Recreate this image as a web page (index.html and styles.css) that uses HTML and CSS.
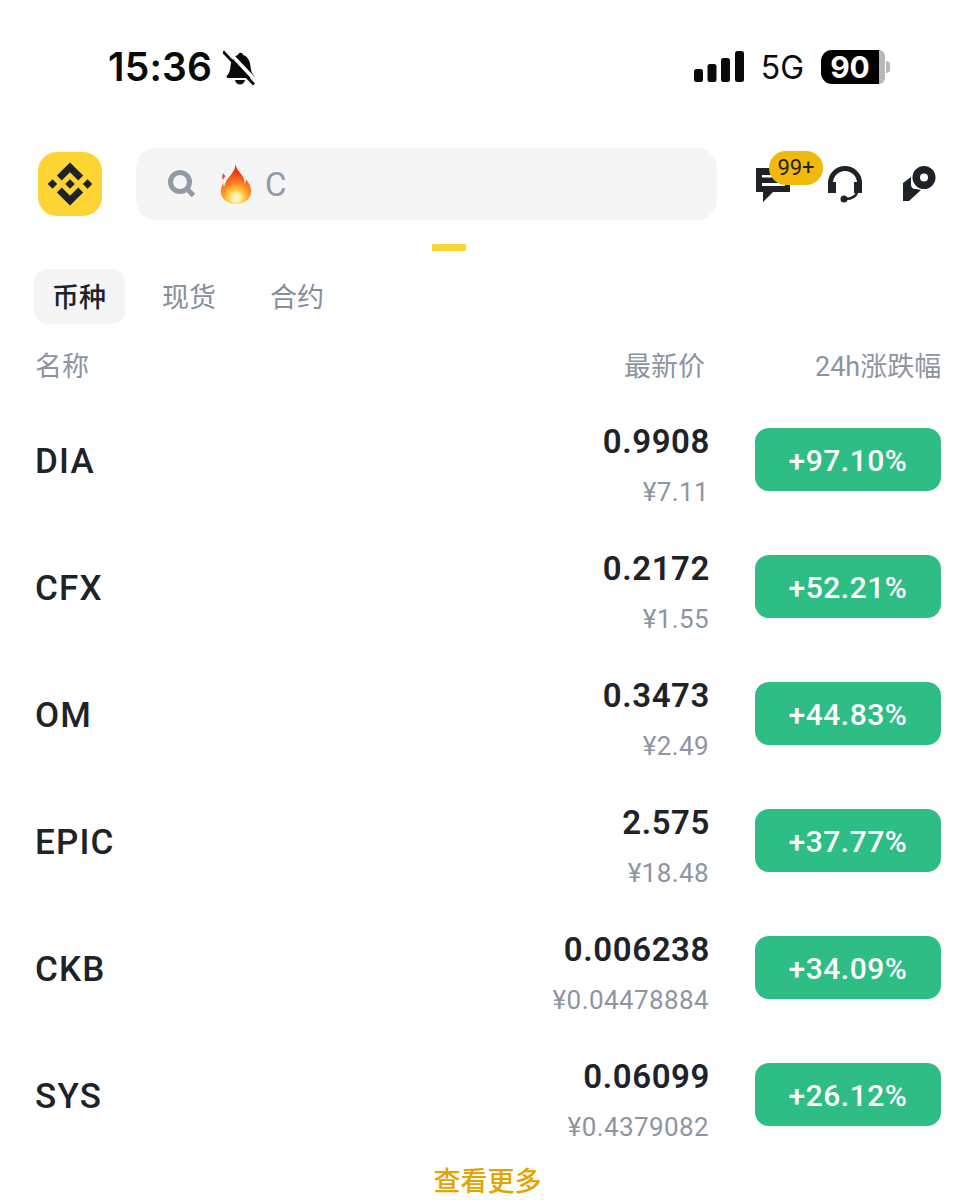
FILE: index.html
```html
<!DOCTYPE html>
<html lang="zh">
<head>
<meta charset="utf-8">
<title>Markets</title>
<link rel="stylesheet" href="styles.css">
</head>
<body>
<div class="page">
  <div class="status">
    <div class="status-left">
      <span class="time">15:36</span>
      <svg class="bell" viewBox="0 0 32 36" width="32" height="36"><path d="M4 25.500c2-2 3-4.500 3.500-9C8 10 11 6 15 5c.3-3 4.700-3 5 0 4 1 7 5 7.500 11.500.5 4.500 1.500 7 3.500 9 1 1 .5 2.500-1 2.500H5c-1.500 0-2-1.500-1-2.500z" fill="#0a0a0a"/><path d="M12 30h10c-.5 3-3 4.500-5 4.500S12.500 33 12 30z" fill="#0a0a0a"/><path d="M3 -1l31 33" stroke="#fff" stroke-width="3.500"/><path d="M0 1.500l31 33" stroke="#0a0a0a" stroke-width="2.800"/></svg>
    </div>
    <div class="status-right">
      <svg class="signal" viewBox="0 0 50 32" width="50" height="32"><rect x="0" y="18" width="9" height="13" rx="2.500"/><rect x="13.500" y="13" width="9" height="18" rx="2.500"/><rect x="27" y="7" width="9" height="24" rx="2.500"/><rect x="41" y="0" width="9" height="31" rx="2.500"/></svg>
      <span class="net">5G</span>
      <div class="battery"><div class="battery-body"><span class="battery-num">90</span></div><div class="battery-rest"></div><div class="battery-cap"></div></div>
    </div>
  </div>

  <div class="header">
    <svg class="logo" viewBox="0 0 64 64" width="64" height="64"><rect width="64" height="64" rx="19" fill="#fcd535"/><g fill="#1e2329" transform="translate(32 32) scale(1.05) translate(-32 -32)"><path d="M32 11.500l12.500 12.500-4.600 4.600L32 20.700l-7.900 7.900-4.600-4.600z"/><path d="M32 52.500L19.500 40l4.600-4.600 7.900 7.900 7.900-7.900 4.600 4.600z"/><path d="M15.300 27.400l4.600 4.600-4.600 4.600-4.600-4.600z"/><path d="M48.700 27.400l4.600 4.600-4.600 4.600-4.600-4.600z"/><path d="M32 27.400l4.600 4.600-4.600 4.600-4.600-4.600z"/></g></svg>
    <div class="search">
      <svg class="search-icon" viewBox="0 0 28 28" width="28" height="28"><circle cx="12" cy="12" r="9.500" fill="none" stroke="#929aa5" stroke-width="5"/><path d="M18.500 18.500l7 7" stroke="#929aa5" stroke-width="5"/></svg>
      <svg class="flame" viewBox="0 0 32 40" width="32" height="40"><defs><radialGradient id="fi" gradientUnits="userSpaceOnUse" cx="16" cy="34" r="32"><stop offset="0" stop-color="#fffef0"/><stop offset=".12" stop-color="#fff3a0"/><stop offset=".28" stop-color="#ffc23a"/><stop offset=".5" stop-color="#fb7c1e"/><stop offset=".8" stop-color="#ef3a14"/><stop offset="1" stop-color="#e62a10"/></radialGradient></defs><path d="M15.500 0c.7 5 4.500 8 7 12 1.500 2.500 2 4.500 2.200 7.500 1-1 1.500-2.500 1.300-4 3 3 5 7.500 5 12C31 35 24.500 40 16 40S1 35 1 27.500c0-3.500 1-6.500 2.500-9-.5 1.500-.3 3 .8 4C5 18 7 15.500 9.500 12.500 12.500 9 15.500 5 15.500 0z" fill="url(#fi)"/><path d="M3 9c.5 1.500 1.500 2.500 3 3-1.500 1-2.500 2.500-3 4-1-2-1-4.500 0-7z" fill="#f14a1a"/></svg>
      <span class="search-text">C</span>
    </div>
    <div class="actions">
      <div class="msg">
        <svg viewBox="0 0 36 36" width="36" height="36"><path fill-rule="evenodd" d="M1 2h34v24H18L8 36V26H1zM7 9v2.500h22V9zM7 17v3h23v-3z" fill="#1e2329"/></svg>
        <span class="badge">99+</span>
      </div>
      <svg class="headset" viewBox="0 0 36 37" width="36" height="37"><path d="M3.500 24v-7a14.500 14.500 0 0 1 29 0v7" fill="none" stroke="#1e2329" stroke-width="5"/><path d="M1 16h8v11H1zM27 16h8v11h-8z" fill="#1e2329"/><path d="M30 25c0 5-5 8-12 8" fill="none" stroke="#1e2329" stroke-width="2.500"/><circle cx="17" cy="33" r="3.500" fill="#1e2329"/></svg>
      <svg class="gift" viewBox="0 0 36 36" width="36" height="36"><path fill-rule="evenodd" d="M23 0a11.500 11.500 0 1 1 0 23 11.500 11.500 0 0 1 0-23zm0 7.500a4 4 0 1 0 0 8 4 4 0 0 0 0-8z" fill="#1e2329"/><path d="M2 17l8-6v8c.5 3 2.500 4.500 5 4l5 1L8 35H2z" fill="#1e2329"/></svg>
    </div>
  </div>

  <div class="indicator"></div>

  <div class="tabs">
    <span class="tab tab-active">币种</span>
    <span class="tab">现货</span>
    <span class="tab">合约</span>
  </div>

  <div class="cols">
    <span class="col-name">名称</span>
    <span class="col-price">最新价</span>
    <span class="col-change">24h涨跌幅</span>
  </div>

  <div class="list">
    <div class="row"><span class="name">DIA</span><div class="prices"><span class="price">0.9908</span><span class="sub">¥7.11</span></div><span class="pct">+97.10%</span></div>
    <div class="row"><span class="name">CFX</span><div class="prices"><span class="price">0.2172</span><span class="sub">¥1.55</span></div><span class="pct">+52.21%</span></div>
    <div class="row"><span class="name">OM</span><div class="prices"><span class="price">0.3473</span><span class="sub">¥2.49</span></div><span class="pct">+44.83%</span></div>
    <div class="row"><span class="name">EPIC</span><div class="prices"><span class="price">2.575</span><span class="sub">¥18.48</span></div><span class="pct">+37.77%</span></div>
    <div class="row"><span class="name">CKB</span><div class="prices"><span class="price">0.006238</span><span class="sub">¥0.04478884</span></div><span class="pct">+34.09%</span></div>
    <div class="row"><span class="name">SYS</span><div class="prices"><span class="price">0.06099</span><span class="sub">¥0.4379082</span></div><span class="pct">+26.12%</span></div>
  </div>

  <div class="more">查看更多</div>
</div>
</body>
</html>
```
FILE: styles.css
```css
* { box-sizing: border-box; }
html, body { margin: 0; padding: 0; background: #fff; }
body { font-family: Roboto, "Noto Sans CJK SC", sans-serif; color: #1e2329; overflow: hidden; }
.page { width: 975px; height: 1200px; overflow: hidden; }

.status { height: 148px; display: flex; justify-content: space-between; align-items: flex-start; padding: 44px 85px 0 108px; }
.status-left { display: flex; align-items: center; gap: 11px; }
.time { font-family: Inter, sans-serif; font-size: 39px; line-height: 46px; font-weight: 600; color: #0a0a0a; letter-spacing: .2px; }
.bell { margin-top: 2px; }
.status-right { display: flex; align-items: center; height: 46px; }
.signal { fill: #0a0a0a; margin-right: 17px; margin-top: -1px; }
.net { font-family: Inter, sans-serif; font-size: 32px; font-weight: 400; color: #0a0a0a; margin-right: 17px; }
.battery { display: flex; align-items: center; height: 34px; }
.battery-body { width: 58px; height: 34px; background: #000; border-radius: 11px 0 0 11px; display: flex; align-items: center; justify-content: center; }
.battery-num { font-family: Inter, sans-serif; font-size: 30px; font-weight: 700; color: #fff; }
.battery-rest { width: 6px; height: 34px; background: #b8b8b8; border-radius: 0 9px 9px 0; }
.battery-cap { width: 4px; height: 12px; margin-left: 1px; background: #b8b8b8; border-radius: 0 4px 4px 0; }

.header { display: flex; align-items: center; height: 72px; padding-left: 38px; }
.logo { flex: none; }
.search { width: 581px; height: 72px; margin-left: 34px; background: #f5f5f5; border-radius: 20px; display: flex; align-items: center; padding-left: 32px; }
.search-icon { flex: none; margin-top: -1px; }
.flame { flex: none; margin-left: 24px; }
.search-text { font-size: 33px; color: #929aa5; margin-left: 13px; font-weight: 400; }
.actions { display: flex; align-items: center; position: relative; }
.msg { position: relative; width: 36px; height: 36px; margin-left: 38px; }
.badge { position: absolute; left: 14px; top: -15px; width: 54px; height: 34px; border-radius: 17px; background: #f0b90b; color: #1e2329; font-size: 22px; line-height: 34px; text-align: center; }
.headset { margin-left: 36px; margin-top: 1px; }
.gift { margin-left: 38px; }

.indicator { width: 34px; height: 7px; margin: 24px 0 0 432px; background: #fcd535; border-radius: 1px; }

.tabs { display: flex; align-items: center; margin: 18px 0 0 34px; height: 55px; }
.tab { font-size: 27px; color: #848e9c; font-weight: 400; line-height: 58px; height: 55px; border-radius: 14px; }
.tab + .tab { margin-left: 54px; }
.tab-active { background: #f5f5f5; color: #1e2329; font-weight: 500; width: 91px; padding: 0 18px; margin-right: -17px; }

.cols { display: flex; height: 30px; margin-top: 27px; padding: 0 34px 0 35px; font-size: 27px; line-height: 32px; color: #8d95a3; }
.col-name { flex: 1; }
.col-price { margin-right: 110px; }
.col-change { width: 126px; text-align: right; white-space: nowrap; }

.list { margin-top: 47px; padding: 0 34px 0 35px; display: flex; flex-direction: column; }
.row { height: 127px; display: flex; align-items: flex-start; }
.name { flex: 1; font-size: 35px; line-height: 67px; font-weight: 500; color: #1e2329; letter-spacing: 1.2px; }
.prices { display: flex; flex-direction: column; align-items: flex-end; margin-right: 46px; }
.price { font-size: 33px; line-height: 40px; font-weight: 600; color: #1e2329; margin-top: -6px; letter-spacing: .6px; transform: translateX(1px); }
.sub { font-size: 26px; line-height: 30px; color: #8d95a3; margin-top: 15px; letter-spacing: .4px; }
.pct { width: 186px; height: 63px; border-radius: 14px; background: #2ebd85; color: #fff; font-size: 30px; font-weight: 500; line-height: 65px; text-align: center; letter-spacing: .5px; }

.more { margin-top: -25px; text-align: center; font-size: 27px; line-height: 34px; color: #e2a400; font-weight: 500; }
```
